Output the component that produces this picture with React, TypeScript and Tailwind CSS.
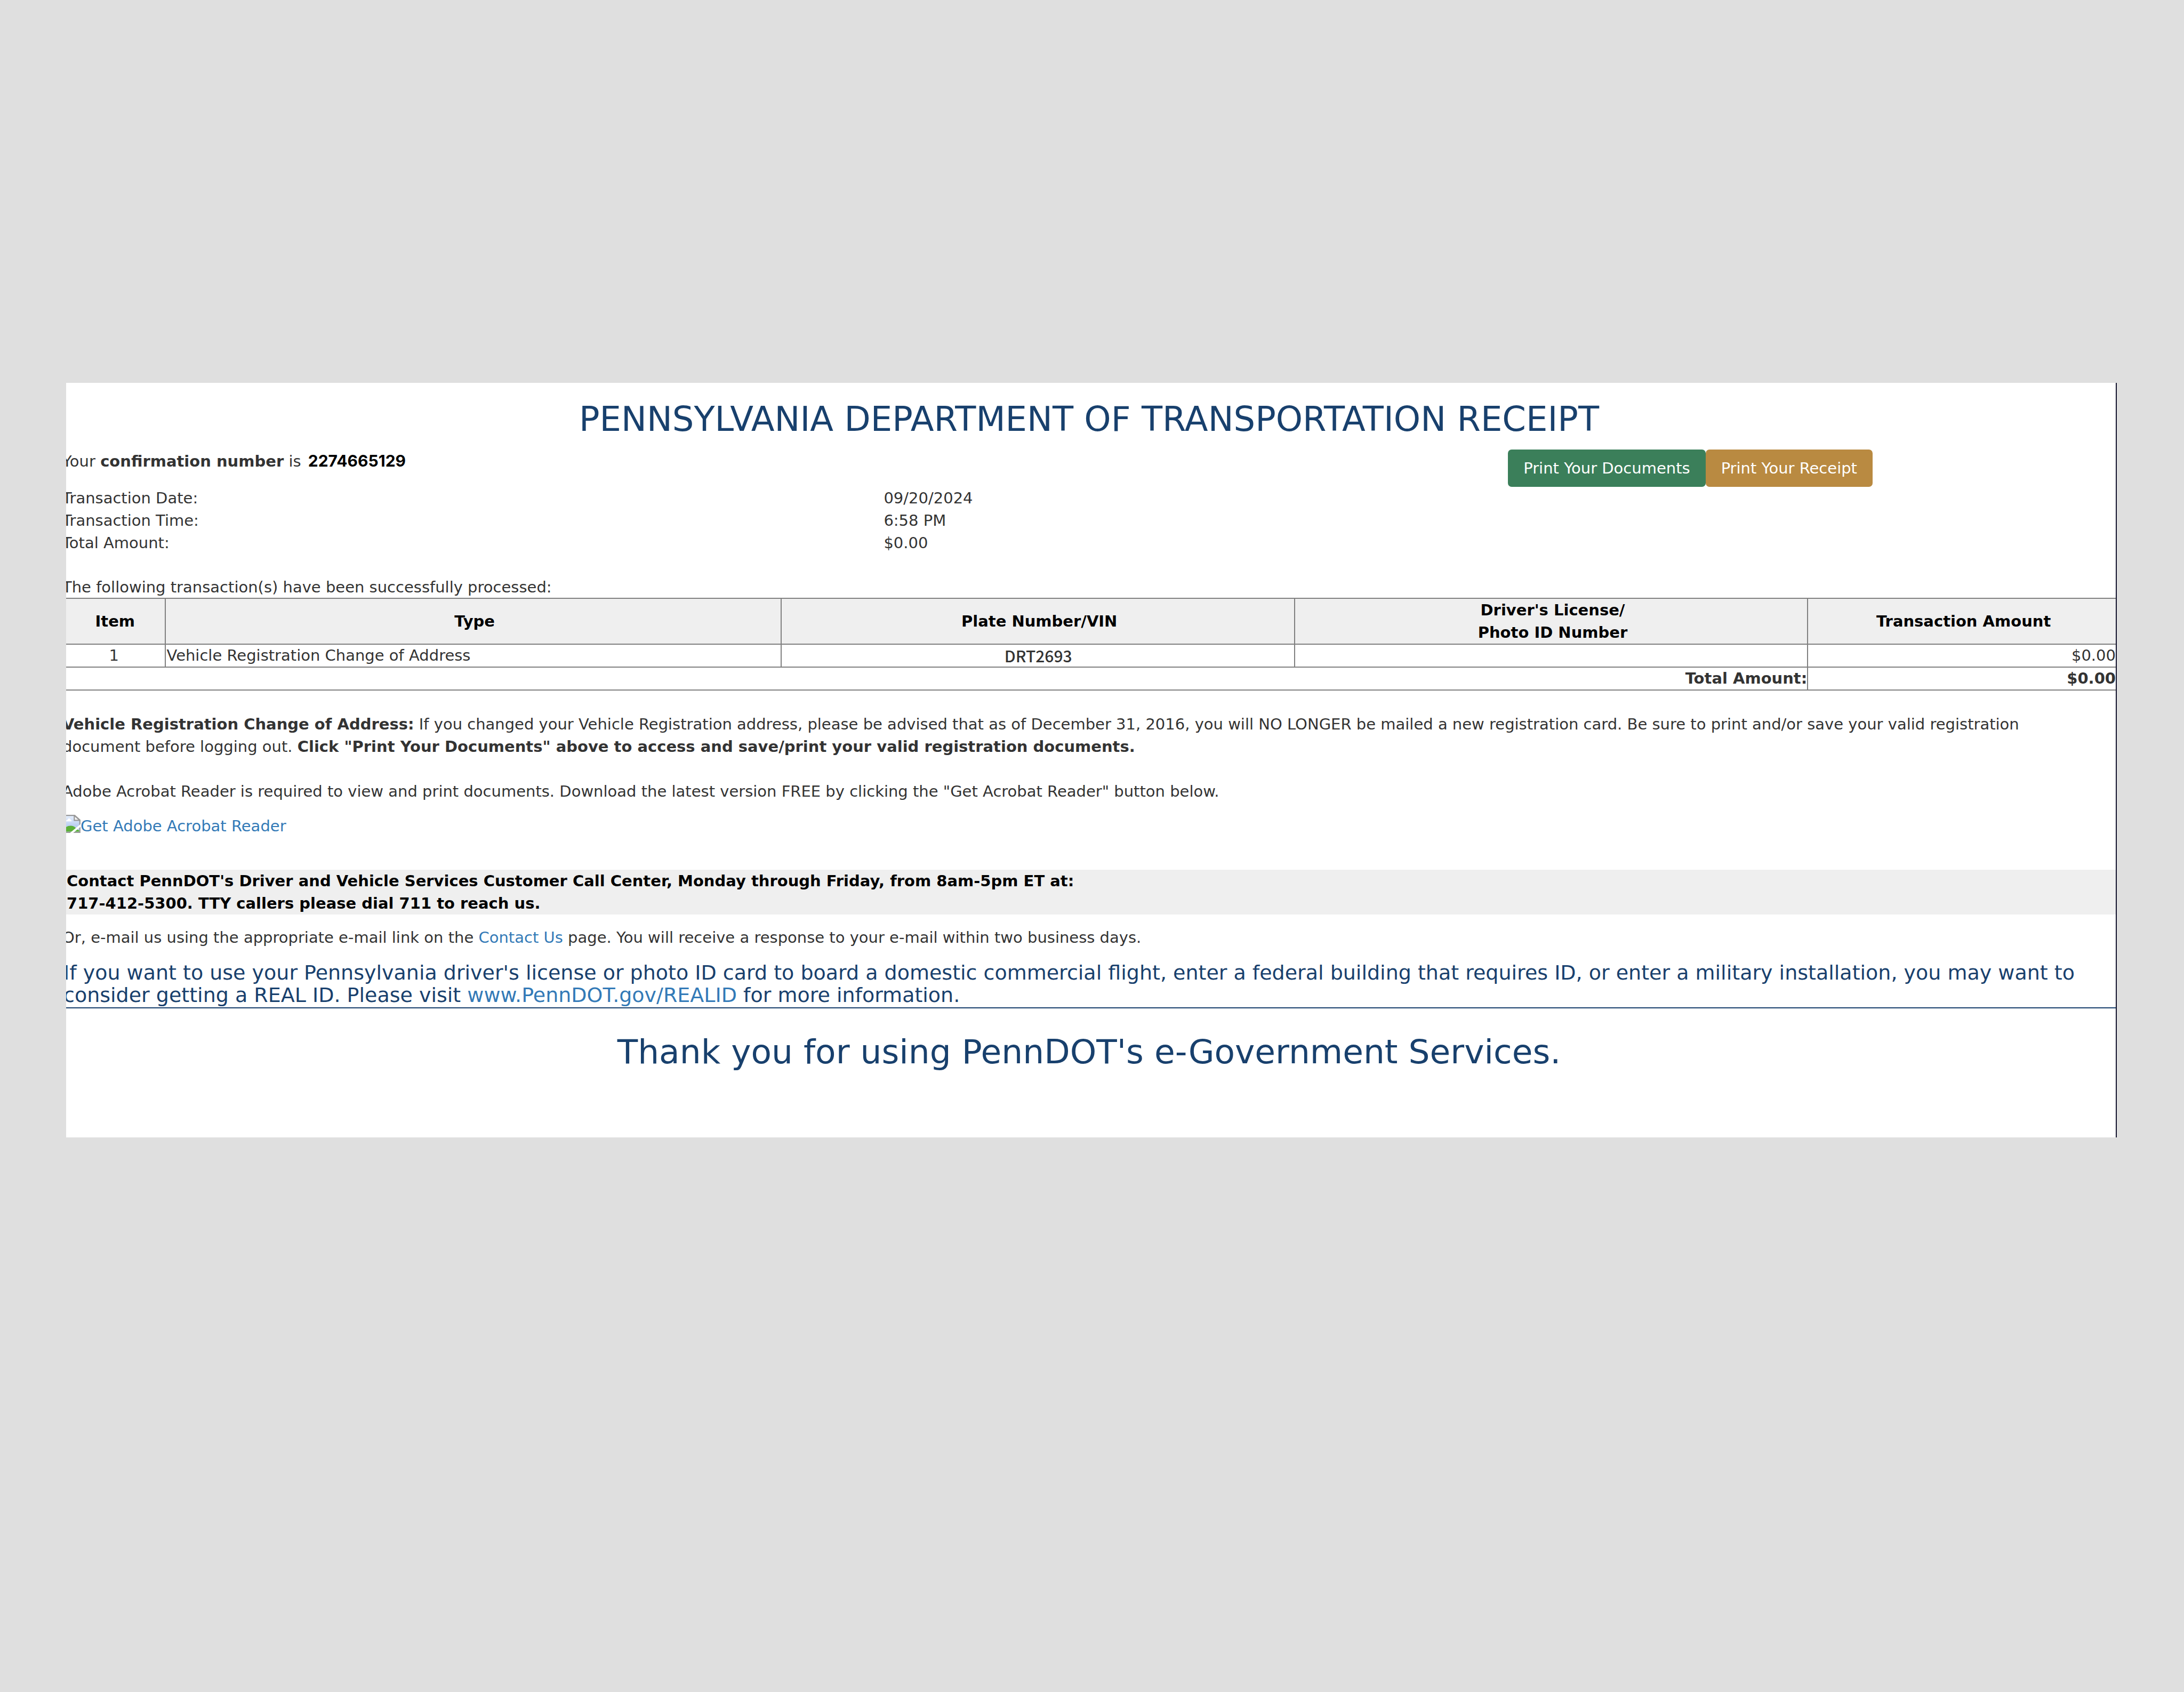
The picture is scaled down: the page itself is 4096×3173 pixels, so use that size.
import type { ReactNode } from "react";

const details = [
  { label: "Transaction Date:", value: "09/20/2024" },
  { label: "Transaction Time:", value: "6:58 PM" },
  { label: "Total Amount:", value: "$0.00" },
];

const cell = "border-y-2 border-[#808080] p-0 pl-0.5 leading-[41px]";
const divided = "border-r-2";

function HeaderCell({ width, last, children }: { width: string; last?: boolean; children: ReactNode }) {
  return (
    <th
      scope="col"
      className={`${width} ${last ? "" : "border-r-2"} border-y-2 border-[#808080] bg-[#efefef] p-0 pl-1.5 text-center align-middle font-bold text-black`}
    >
      {children}
    </th>
  );
}

function TextLink({ children }: { children: ReactNode }) {
  return (
    <a href="#" className="text-[#337ab7]">
      {children}
    </a>
  );
}

function BrokenImageIcon() {
  return (
    <svg viewBox="0 0 14 14" className="h-[34px] w-[34px] shrink-0" aria-hidden="true">
      <defs>
        <linearGradient id="sky" x1="0" y1="0" x2="0" y2="1">
          <stop offset="0" stopColor="#e4eefc" />
          <stop offset="0.3" stopColor="#d3e1f8" />
          <stop offset="0.6" stopColor="#bccff0" />
          <stop offset="1" stopColor="#c9d9f4" />
        </linearGradient>
      </defs>
      <path d="M0.5 0.5H9.5L13.5 4V13.5H0.5Z" fill="url(#sky)" stroke="#999" strokeWidth="0.9" />
      <path d="M2.8 5Q3 3.9 4 3.8Q4.3 2.7 5.2 2.7Q6.1 2.8 6.3 3.8Q7.2 4 7.2 5Z" fill="#fff" />
      <path d="M1 13V11.2Q3 8.4 6.6 8.4Q9.6 8.6 11 11L13 12V13Z" fill="#5bb038" />
      <path d="M9.2 0.5V4.3H13.5Z" fill="#f6f6f6" stroke="#999" strokeWidth="0.9" />
      <path d="M6.6 14.4L14.4 7.9" stroke="#fff" strokeWidth="1.6" />
    </svg>
  );
}

export default function App() {
  return (
    <div className="min-h-screen bg-[#dfdfdf] pt-[718px] pr-[126px] pl-[124px] font-['DejaVu_Sans',Verdana,sans-serif] text-[29px] leading-[42px] text-[#333333]">
      <main className="overflow-hidden border-r-2 border-[#14142e] bg-white pb-[125px]">
        <div className="-ml-[7px]">
          <h1 className="pt-8 text-center text-[64px] leading-[72px] text-[#18406d]">
            PENNSYLVANIA DEPARTMENT OF TRANSPORTATION RECEIPT
          </h1>

          <div className="mt-[21px] flex items-start justify-between pr-[456px]">
            <p>
              Your <strong>confirmation number</strong> is{" "}
              <span className="ml-1 font-['Inter',sans-serif] text-[30px] font-bold text-black">2274665129</span>
            </p>
            <div className="flex">
              <button type="button" className="h-[70px] rounded-[7px] bg-[#3b7f5a] px-[29px] text-white">
                Print Your Documents
              </button>
              <button type="button" className="h-[70px] rounded-[7px] bg-[#b98a41] px-[29px] text-white">
                Print Your Receipt
              </button>
            </div>
          </div>

          <dl className="grid grid-cols-[40%_1fr]">
            {details.map((d) => (
              <div key={d.label} className="contents">
                <dt>{d.label}</dt>
                <dd>{d.value}</dd>
              </div>
            ))}
          </dl>

          <table className="mt-[42px] w-full table-fixed border-collapse">
            <caption className="caption-top text-left leading-[40px]">
              The following transaction(s) have been successfully processed:
            </caption>
            <thead>
              <tr>
                <HeaderCell width="w-[5%]">Item</HeaderCell>
                <HeaderCell width="w-[30%]">Type</HeaderCell>
                <HeaderCell width="w-[25%]">Plate Number/VIN</HeaderCell>
                <HeaderCell width="w-[25%]">
                  Driver's License/
                  <br />
                  Photo ID Number
                </HeaderCell>
                <HeaderCell width="w-[15%]" last>
                  Transaction Amount
                </HeaderCell>
              </tr>
            </thead>
            <tbody>
              <tr>
                <td className={`${cell} ${divided} text-center`}>1</td>
                <td className={`${cell} ${divided}`}>Vehicle Registration Change of Address</td>
                <td
                  className={`${cell} ${divided} text-center font-['Noto_Sans_CJK_SC',sans-serif] text-[30px] font-medium`}
                >
                  DRT2693
                </td>
                <td className={`${cell} ${divided}`}></td>
                <td className={`${cell} text-right`}>$0.00</td>
              </tr>
              <tr className="font-bold">
                <td colSpan={4} className={`${cell} ${divided} text-right`}>
                  Total Amount:
                </td>
                <td className={`${cell} text-right`}>$0.00</td>
              </tr>
            </tbody>
          </table>

          <p className="mt-[42px] pr-[100px]">
            <strong>Vehicle Registration Change of Address:</strong> If you changed your Vehicle Registration address,
            please be advised that as of December 31, 2016, you will NO LONGER be mailed a new registration card. Be
            sure to print and/or save your valid registration document before logging out.{" "}
            <strong>
              Click "Print Your Documents" above to access and save/print your valid registration documents.
            </strong>
          </p>

          <p className="mt-[42px]">
            Adobe Acrobat Reader is required to view and print documents. Download the latest version FREE by clicking
            the "Get Acrobat Reader" button below.
          </p>

          <a href="#" className="mt-[23px] flex w-fit items-start text-[#337ab7]">
            <BrokenImageIcon />
            Get Adobe Acrobat Reader
          </a>

          <p className="mt-[61px] bg-[#efefef] pl-2 font-bold text-black">
            Contact PennDOT's Driver and Vehicle Services Customer Call Center, Monday through Friday, from 8am-5pm ET
            at:
            <br />
            717-412-5300. TTY callers please dial 711 to reach us.
          </p>

          <p className="mt-[22px]">
            Or, e-mail us using the appropriate e-mail link on the <TextLink>Contact Us</TextLink> page. You will
            receive a response to your e-mail within two business days.
          </p>

          <p className="mt-6 border-b-2 border-[#18406d] pb-0.5 pl-0.5 text-[38px] text-[#18406d]">
            If you want to use your Pennsylvania driver's license or photo ID card to board a domestic commercial
            flight, enter a federal building that requires ID, or enter a military installation, you may want to
            consider getting a REAL ID. Please visit <TextLink>www.PennDOT.gov/REALID</TextLink> for more information.
          </p>

          <h2 className="mt-[47px] text-center text-[63px] leading-[70px] text-[#18406d]">
            Thank you for using PennDOT's e-Government Services.
          </h2>
        </div>
      </main>
    </div>
  );
}
